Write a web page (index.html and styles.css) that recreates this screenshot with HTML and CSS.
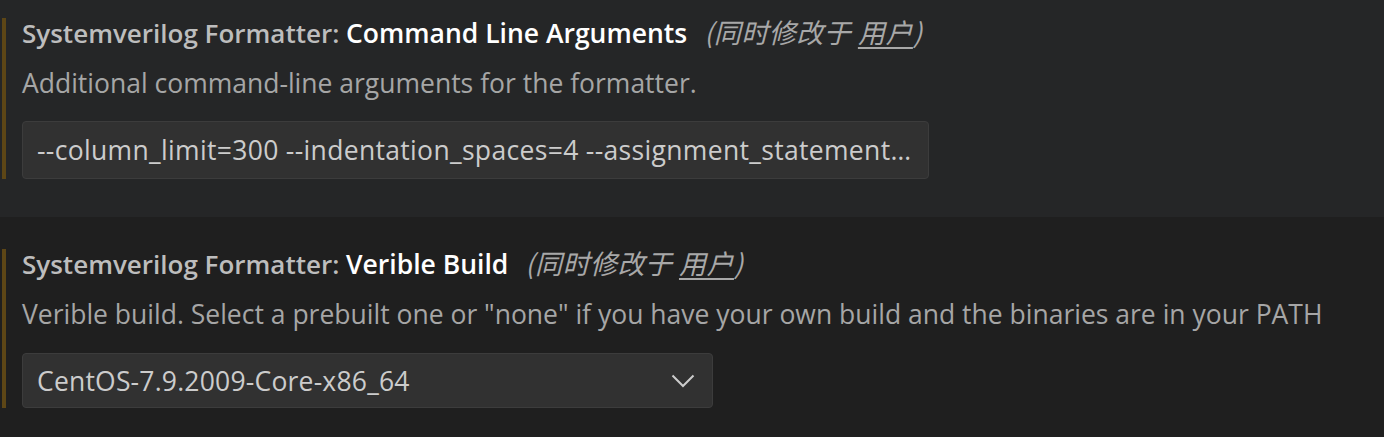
FILE: index.html
```html
<!DOCTYPE html>
<html lang="zh">
<head>
<meta charset="utf-8">
<title>Settings</title>
<link rel="stylesheet" href="styles.css">
</head>
<body>
<div class="list">
  <div class="setting focused first">
    <div class="item">
      <div class="title">
        <span class="category">Systemverilog Formatter: </span><span class="label">Command Line Arguments</span><span class="modified">(同时修改于 <span class="link">用户</span>)</span>
      </div>
      <div class="desc">Additional command-line arguments for the formatter.</div>
      <div class="input input-wide">--column_limit=300 --indentation_spaces=4 --assignment_statement…</div>
    </div>
  </div>
  <div class="setting">
    <div class="item">
      <div class="title">
        <span class="category">Systemverilog Formatter: </span><span class="label">Verible Build</span><span class="modified">(同时修改于 <span class="link">用户</span>)</span>
      </div>
      <div class="desc">Verible build. Select a prebuilt one or "none" if you have your own build and the binaries are in your PATH</div>
      <div class="select">
        <span class="select-value">CentOS-7.9.2009-Core-x86_64</span>
        <svg class="chevron" width="24" height="14" viewBox="0 0 24 14"><path d="M1.5 1.5 L12 12 L22.5 1.5" fill="none" stroke="#cccccc" stroke-width="2"/></svg>
      </div>
    </div>
  </div>
</div>
</body>
</html>
```

FILE: styles.css
```css
html, body {
  margin: 0;
  padding: 0;
  background: #1f1f1f;
  overflow: hidden;
}
body {
  font-family: "Open Sans", "Noto Sans CJK SC", sans-serif;
  font-size: 26.5px;
  color: #cccccc;
}
.list {
  display: flex;
  flex-direction: column;
}
.setting {
  padding: 32px 0 38px 2px;
}
.setting.first {
  margin-top: -14px;
}
.setting.focused {
  background: #252627;
}
.item {
  border-left: 4px solid #5d4616;
  padding-left: 16px;
  display: flex;
  flex-direction: column;
  align-items: flex-start;
}
.title {
  line-height: 28px;
  font-size: 26px;
  white-space: nowrap;
}
.category {
  color: #bdbdbd;
  font-weight: 600;
}
.label {
  color: #ffffff;
  font-weight: 600;
  font-size: 26.5px;
}
.modified {
  margin-left: 17px;
  color: #a8a8a8;
  font-style: italic;
  font-family: "Noto Sans CJK SC", "Open Sans", sans-serif;
  font-size: 27px;
  letter-spacing: 0.5px;
}
.link {
  text-decoration: underline;
  text-underline-offset: 4px;
}
.desc {
  margin-top: 22px;
  line-height: 28px;
  color: #a6a6a6;
  white-space: nowrap;
}
.input {
  margin-top: 24px;
  box-sizing: border-box;
  width: 907px;
  height: 58px;
  background: #313131;
  border: 1px solid #3c3c3c;
  border-radius: 4px;
  padding: 0 14px 0 14px;
  line-height: 56px;
  white-space: nowrap;
  color: #cccccc;
  letter-spacing: 0.33px;
}
.select {
  margin-top: 25px;
  box-sizing: border-box;
  width: 691px;
  height: 55px;
  background: #313131;
  border: 1px solid #3c3c3c;
  border-radius: 4px;
  padding: 0 17px 0 14px;
  display: flex;
  align-items: center;
  justify-content: space-between;
  color: #cccccc;
}
.select-value {
  letter-spacing: 0.2px;
}
.chevron {
  display: block;
}
```
